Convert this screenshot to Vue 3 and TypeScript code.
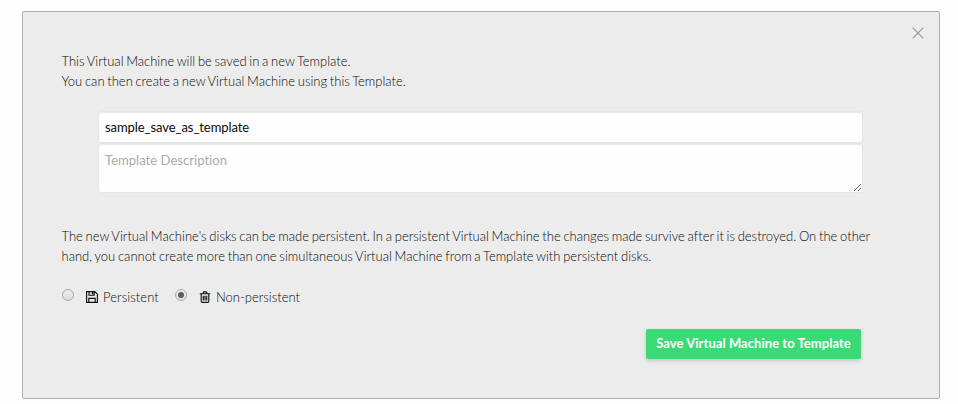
<script setup lang="ts">
import { ref } from 'vue'

const name = ref('sample_save_as_template')
const description = ref('')
const mode = ref<'persistent' | 'non-persistent'>('non-persistent')
</script>

<template>
  <section class="panel">
    <button class="close" type="button" aria-label="Close">
      <svg width="12" height="12" viewBox="0 0 12 12"><path d="M.7.7l10.6 10.6M11.3.7L.7 11.3" /></svg>
    </button>
    <p class="copy">
      This Virtual Machine will be saved in a new Template.<br />
      You can then create a new Virtual Machine using this Template.
    </p>
    <div class="fields">
      <input v-model="name" class="field name" type="text" />
      <textarea v-model="description" class="field description" placeholder="Template Description"></textarea>
    </div>
    <p class="copy details">
      The new Virtual Machine's disks can be made persistent. In a persistent Virtual Machine the changes made survive after it is destroyed. On the other<br />
      hand, you cannot create more than one simultaneous Virtual Machine from a Template with persistent disks.
    </p>
    <div class="options">
      <label class="option">
        <input v-model="mode" class="radio" type="radio" name="mode" value="persistent" />
        <svg class="icon" width="12" height="12" viewBox="0 0 12 12">
          <path d="M.6.6h8.2l2.6 2.6v8.2H.6zM3 .8v3.4h5.2V.8M2.8 11.2V7.4h6.4v3.8" />
          <path class="solid" d="M5.8 1h1.6v2.5H5.8z" />
        </svg>
        <span class="persistent-label">Persistent</span>
      </label>
      <label class="option">
        <input v-model="mode" class="radio" type="radio" name="mode" value="non-persistent" />
        <svg class="icon" width="12" height="12" viewBox="0 0 12 12">
          <path d="M.8 2.7h10.4M4 2.5l.6-1.7h2.8L8 2.5M2.2 2.8v7.4q0 1.2 1 1.2h5.6q1 0 1-1.2V2.8M4.3 4.7v4.8M6 4.7v4.8M7.7 4.7v4.8" />
        </svg>
        <span>Non-persistent</span>
      </label>
    </div>
    <div class="actions">
      <button class="save" type="button">Save Virtual Machine to Template</button>
    </div>
  </section>
</template>

<style>
body {
  background: #fefefe;
}
</style>

<style scoped>
.panel {
  position: relative;
  box-sizing: border-box;
  width: 918px;
  height: 388px;
  margin: 11px 0 0 22px;
  padding: 39px 38px 0;
  border: 1px solid #b0b0b0;
  border-radius: 2px;
  background: #ececec;
  color: #0a0a0a;
  font: 300 13px/20px Lato, sans-serif;
  font-variant-ligatures: none;
}
.close {
  position: absolute;
  top: 15px;
  right: 15px;
  display: flex;
  padding: 0;
  border: 0;
  background: none;
}
.close svg {
  fill: none;
  stroke: #999;
  stroke-width: 1.2;
}
.copy {
  margin: 0;
  padding-left: 0.5px;
  white-space: nowrap;
  word-spacing: -0.82px;
}
.fields {
  display: flex;
  flex-direction: column;
  margin: 20px 38px 0 37px;
}
.field {
  box-sizing: border-box;
  display: block;
  width: 765px;
  margin: 0;
  border: 1px solid #e6e6e6;
  border-radius: 3px;
  outline: 0;
  background: #fefefe;
  box-shadow: inset 0 1px 1px rgba(0, 0, 0, 0.08);
  color: #0a0a0a;
  font: 400 13px/20px Lato, sans-serif;
  font-variant-ligatures: none;
}
.name {
  height: 32px;
  padding: 0 6px;
  letter-spacing: -0.07px;
}
.description {
  height: 50px;
  padding: 6px;
  resize: vertical;
}
.description::placeholder {
  color: #aaa;
  opacity: 1;
  letter-spacing: 0.04px;
}
.details {
  margin-top: 33px;
}
.options {
  display: flex;
  gap: 16px;
  height: 20px;
  margin-top: 21px;
}
.option {
  display: flex;
  align-items: center;
}
.persistent-label {
  width: 55px;
  letter-spacing: 0.08px;
  white-space: nowrap;
}
.radio {
  appearance: none;
  box-sizing: border-box;
  flex: none;
  width: 12px;
  height: 12px;
  margin: 0 12px 4px 1px;
  border: 1px solid #aaa;
  border-radius: 50%;
  background: linear-gradient(#eee, #ddd);
}
.radio:checked {
  background: radial-gradient(circle, #606060 0 2.7px, transparent 3.4px), linear-gradient(#eee, #ddd);
}
.icon {
  flex: none;
  margin-right: 5px;
  fill: none;
  stroke: #111;
  stroke-width: 1.15;
}
.icon .solid {
  fill: #111;
  stroke: none;
}
.actions {
  display: flex;
  justify-content: flex-end;
  margin: 22px 40px 0 0;
}
.save {
  width: 215px;
  height: 30px;
  padding: 0 0 2px;
  border: 0;
  border-radius: 2px;
  background: #3adb76;
  box-shadow: 0 2px 4px rgba(0, 0, 0, 0.16);
  color: #fefefe;
  font: 700 13px/20px Lato, sans-serif;
  letter-spacing: 0.05px;
  white-space: nowrap;
}
</style>
